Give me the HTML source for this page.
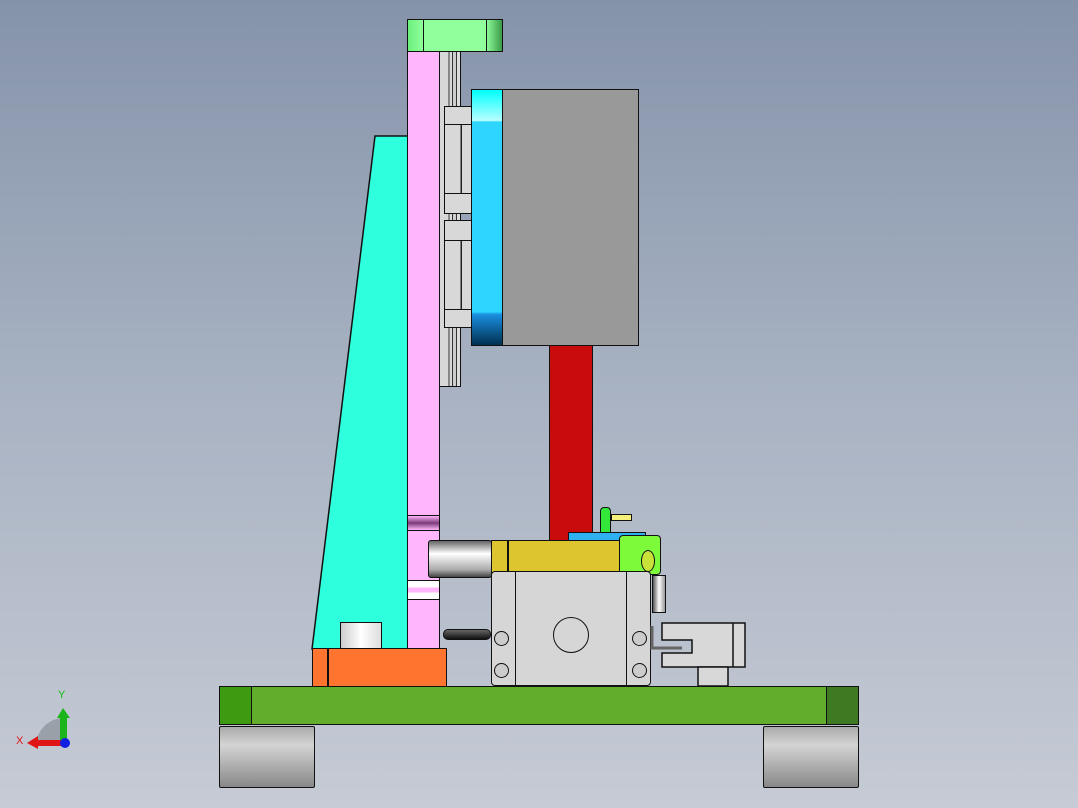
<!DOCTYPE html><html><head><style>
body{margin:0;width:1078px;height:808px;overflow:hidden;background:linear-gradient(#8593aa,#a9b3c3 50%,#c6cbd5);position:relative;font-family:"Liberation Sans",sans-serif}
.a{position:absolute;box-sizing:border-box;border:1.5px solid #111}
</style></head><body>
<svg class="" style="position:absolute;left:0;top:0" width="1078" height="808">
<polygon points="375,136 408,136 408,649 312,649" fill="#2effdc" stroke="#111" stroke-width="1.5"/>
</svg>
<!-- rails -->
<div class="a" style="left:439px;top:51px;width:22px;height:336px;background:linear-gradient(90deg,#d8d8d8 0 40%,#888 40% 50%,#d8d8d8 50% 60%,#333 60% 65%,#ccc 65% 80%,#333 80% 85%,#ddd 85%)"></div>
<div class="a" style="left:444px;top:106px;width:28px;height:108px;background:#d8d8d8"></div>
<div class="a" style="left:444px;top:124px;width:28px;height:70px;background:linear-gradient(90deg,#d8d8d8 60%,#222 60% 65%,#d8d8d8 65%)"></div>
<div class="a" style="left:444px;top:220px;width:28px;height:108px;background:#d8d8d8"></div>
<div class="a" style="left:444px;top:240px;width:28px;height:70px;background:linear-gradient(90deg,#d8d8d8 60%,#222 60% 65%,#d8d8d8 65%)"></div>
<!-- pink plate -->
<div class="a" style="left:407px;top:50px;width:33px;height:602px;background:#ffb6fb"></div>
<div class="a" style="left:407px;top:515px;width:33px;height:16px;background:linear-gradient(#ffb6fb,#7a3a7a,#ffb6fb)"></div>
<div class="a" style="left:407px;top:580px;width:33px;height:20px;background:linear-gradient(#fff 0 35%,#ffb6fb 35% 65%,#fff 65%)"></div>
<!-- green top -->
<div class="a" style="left:407px;top:19px;width:96px;height:33px;background:linear-gradient(90deg,#6cf07c,#90ff9c 16%,#90ff9c 83%,#3a9a48)"></div>
<div style="position:absolute;left:423px;top:19px;width:64px;height:33px;border-left:1.5px solid #111;border-right:1.5px solid #111;box-sizing:border-box"></div>
<!-- cyan -->
<div class="a" style="left:471px;top:89px;width:33px;height:257px;background:linear-gradient(#00ffff,#b8ffff 12%,#2ed6ff 12.5%,#2ed6ff 87%,#1a8ee0 88%,#003050)"></div>
<div class="a" style="left:502px;top:89px;width:137px;height:257px;background:#999"></div>
<!-- red -->
<div class="a" style="left:549px;top:345px;width:44px;height:196px;background:#c80c0c"></div>
<!-- small bits -->
<div class="a" style="left:600px;top:507px;width:11px;height:26px;background:#33e83a;border-radius:4px 4px 0 0"></div>
<div class="a" style="left:611px;top:514px;width:21px;height:7px;background:#f5f07a"></div>
<div class="a" style="left:568px;top:532px;width:78px;height:10px;background:#2fb0f0"></div>
<!-- silver cylinder -->
<div class="a" style="left:428px;top:540px;width:64px;height:38px;background:linear-gradient(#666,#fff 35%,#aaa 80%,#444);border-radius:3px"></div>
<!-- yellow -->
<div class="a" style="left:491px;top:540px;width:130px;height:33px;background:#ddc530"></div>
<div style="position:absolute;left:507px;top:540px;width:1.5px;height:33px;background:#111"></div>
<div class="a" style="left:619px;top:535px;width:42px;height:40px;background:#7dfa3a;border-radius:4px"></div>
<div class="a" style="left:641px;top:550px;width:14px;height:22px;background:#c9e23a;border-radius:50%"></div>
<!-- side pins -->
<div class="a" style="left:652px;top:575px;width:14px;height:38px;background:linear-gradient(90deg,#555,#fff,#999)"></div>
<!-- gray body -->
<div class="a" style="left:491px;top:571px;width:160px;height:115px;background:#d6d6d6;border-radius:4px"></div>
<div style="position:absolute;left:515px;top:572px;width:112px;height:113px;border-left:1.5px solid #111;border-right:1.5px solid #111;box-sizing:border-box"></div>
<div class="a" style="left:553px;top:617px;width:36px;height:36px;border-radius:50%"></div>
<div class="a" style="left:494px;top:631px;width:15px;height:15px;border-radius:50%;background:#ccc"></div>
<div class="a" style="left:494px;top:663px;width:15px;height:15px;border-radius:50%;background:#ccc"></div>
<div class="a" style="left:632px;top:631px;width:15px;height:15px;border-radius:50%;background:#ccc"></div>
<div class="a" style="left:632px;top:663px;width:15px;height:15px;border-radius:50%;background:#ccc"></div>
<div class="a" style="left:443px;top:629px;width:48px;height:11px;background:linear-gradient(#666,#111);border-radius:5px"></div>
<!-- right bracket -->
<svg style="position:absolute;left:650px;top:620px" width="100" height="70"><path d="M12 3H95V47H12V33H42V20H12Z" fill="#d8d8d8" stroke="#111" stroke-width="1.5"/><line x1="83" y1="3" x2="83" y2="47" stroke="#111" stroke-width="1.5"/><path d="M48 47H78V66H48Z" fill="#d8d8d8" stroke="#111" stroke-width="1.5"/><path d="M2 6V28H32" fill="none" stroke="#666" stroke-width="3"/></svg>
<!-- orange & white -->
<div class="a" style="left:312px;top:648px;width:135px;height:39px;background:#ff7530"></div>
<div style="position:absolute;left:327px;top:649px;width:1.5px;height:38px;background:#111"></div>
<div class="a" style="left:340px;top:622px;width:42px;height:27px;background:linear-gradient(90deg,#ccc,#fff 50%,#ddd)"></div>
<!-- base -->
<div class="a" style="left:219px;top:686px;width:640px;height:39px;background:#62ad2c"></div>
<div class="a" style="left:219px;top:686px;width:33px;height:39px;background:#3e9a10"></div>
<div class="a" style="left:826px;top:686px;width:33px;height:39px;background:#3e7a22"></div>
<div class="a" style="left:219px;top:726px;width:96px;height:62px;background:linear-gradient(#aaa,#d4d4d4 30%,#888);border-radius:2px"></div>
<div class="a" style="left:763px;top:726px;width:96px;height:62px;background:linear-gradient(#aaa,#d4d4d4 30%,#888);border-radius:2px"></div>
<!-- axes -->
<svg style="position:absolute;left:10px;top:680px" width="80" height="70">
<path d="M54 38A28 28 0 0 0 26 66H54Z" fill="#9aa0a8"/>
<rect x="50" y="36" width="7" height="28" fill="#1bb51b"/><polygon points="47,38 53,28 60,38" fill="#1bb51b"/>
<rect x="28" y="60" width="26" height="6" fill="#e01515"/><polygon points="28,56 17,63 28,69" fill="#e01515"/>
<circle cx="55" cy="63" r="5" fill="#1020e0"/>
<text x="48" y="18" font-size="11" fill="#16c016" font-family="Liberation Sans">Y</text>
<text x="6" y="64" font-size="11" fill="#e01515" font-family="Liberation Sans">X</text>
</svg>
</body></html>
